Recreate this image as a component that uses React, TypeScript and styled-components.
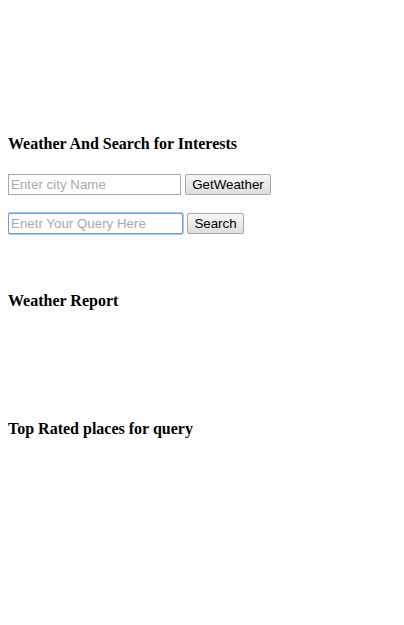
import React, { useState } from 'react';
import styled, { createGlobalStyle } from 'styled-components';

const GlobalStyle = createGlobalStyle`
  body {
    margin: 8px;
    background: #ffffff;
    font-family: "Liberation Serif", "Times New Roman", serif;
    color: #000;
  }
`;

const Page = styled.div`
  padding-top: 127px;
`;

const Heading = styled.h4`
  font-size: 16px;
  font-weight: bold;
  line-height: 18px;
  margin: 0;
`;

const Form = styled.div`
  display: flex;
  flex-direction: column;
  gap: 18px;
  margin-top: 21px;
`;

const Row = styled.div`
  display: flex;
  align-items: center;
  gap: 4px;
`;

const TextInput = styled.input<{ $focused?: boolean; $width: number }>`
  box-sizing: border-box;
  width: ${({ $width }) => $width}px;
  height: 21px;
  padding: 1px 2px;
  font-family: "Liberation Sans", Arial, sans-serif;
  font-size: 13.33px;
  color: #000;
  background: #fff;
  border: 1px solid ${({ $focused }) => ($focused ? '#6d9be6' : '#a9a9a9')};
  border-radius: ${({ $focused }) => ($focused ? '2px' : '0')};
  box-shadow: ${({ $focused }) => ($focused ? '0 0 0 1px #a8c8f5' : 'none')};
  outline: none;

  &::placeholder {
    color: #a9a9a9;
  }
`;

const Button = styled.button<{ $width: number }>`
  box-sizing: border-box;
  width: ${({ $width }) => $width}px;
  height: 21px;
  padding: 0 6px;
  font-family: "Liberation Sans", Arial, sans-serif;
  font-size: 13.33px;
  color: #000;
  background: linear-gradient(#f6f6f6, #dedede);
  border: 1px solid #a6a6a6;
  border-radius: 2px;
  cursor: pointer;
`;

const Section = styled.div<{ $top: number }>`
  margin-top: ${({ $top }) => $top}px;
`;

const App: React.FC = () => {
  const [city, setCity] = useState('');
  const [query, setQuery] = useState('');

  return (
    <>
      <GlobalStyle />
      <Page>
        <Heading>Weather And Search for Interests</Heading>
        <Form>
          <Row>
            <TextInput
              $width={173}
              placeholder="Enter city Name"
              value={city}
              onChange={(e) => setCity(e.target.value)}
            />
            <Button $width={86}>GetWeather</Button>
          </Row>
          <Row>
            <TextInput
              $width={175}
              $focused
              placeholder="Enetr Your Query Here"
              value={query}
              onChange={(e) => setQuery(e.target.value)}
            />
            <Button $width={57}>Search</Button>
          </Row>
        </Form>
        <Section $top={58}>
          <Heading>Weather Report</Heading>
        </Section>
        <Section $top={110}>
          <Heading>Top Rated places for query</Heading>
        </Section>
      </Page>
    </>
  );
};

export default App;
